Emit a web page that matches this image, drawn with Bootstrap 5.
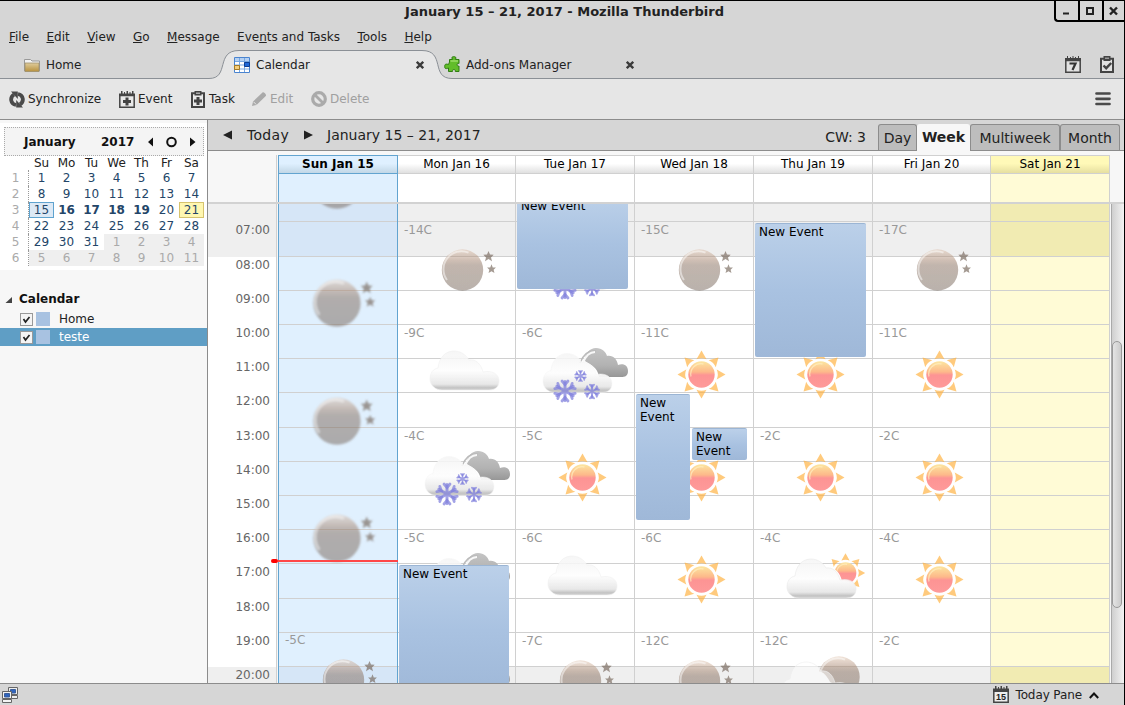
<!DOCTYPE html>
<html lang="en">
<head>
<meta charset="utf-8">
<title>January 15 – 21, 2017 - Mozilla Thunderbird</title>
<meta name="viewport" content="width=device-width, initial-scale=1">
<link href="https://cdn.jsdelivr.net/npm/bootstrap@5.3.0/dist/css/bootstrap.min.css" rel="stylesheet">
<style>
  body { font-family: "DejaVu Sans", Verdana, sans-serif; font-size: 12px; line-height: 16px; color: #222; background: #d6d6d6; }
  svg { display: block; flex: none; }
  .app-window { width: 1125px; height: 705px; background: #d6d6d6; border-top: 1px solid #000; border-right: 1px solid #000; }
  .title-bar { height: 26px; padding: 3px 0 0 5px; font-size: 13px; font-weight: 700; }
  .window-buttons { top: 0; right: 0; width: 70px; height: 21px; border: 2px solid #000; border-width: 0 0 2px 2px; border-bottom-left-radius: 4px; }
  .window-buttons span + span { border-left: 2px solid #000; }
  .menu-bar { height: 20px; padding-left: 9px; gap: 17.4px; }
  .tab-strip { height: 30px; margin-top: 2px; }
  .tab-shape { left: 0; bottom: 0; }
  .app-tab { height: 28px; padding-top: 1px; }
  .tab-name { padding-top: 2px; }
  .tool-strip { height: 41px; background: #e6e6e6; padding-left: 9px; border-bottom: 1px solid #8c8c8c; }
  .tool-item { gap: 3px; }
  .is-off { color: #a0a0a0; }
  .side-pane { width: 208px; background: #f7f7f7; border-right: 1px solid #8c8c8c; }
  .mini-month { margin-top: 3px; height: 147px; background: #fff; padding: 4px 4px 0; }
  .mini-head { width: 200px; height: 29px; background: #f4f4f4; border: 1px dotted #aaa; font-weight: 700; color: #111; }
  .mini-grid { display: grid; grid-template-columns: repeat(8, 25px); grid-template-rows: 14px repeat(6, 16px); text-align: center; color: #234568; }
  .mini-grid > div { line-height: 16px; }
  .mini-grid .day-name { color: #222; line-height: 14px; }
  .mini-grid .week-no { color: #aaa; border-right: 1px dotted #999; padding-right: 1px; }
  .mini-grid .other { color: #aaa; background: #efefef; }
  .mini-grid .today { background: #dde9f5; box-shadow: inset 0 0 0 1px #5fa3cf; }
  .mini-grid .picked { background: #fff7b0; box-shadow: inset 0 0 0 1px #d6c36e; }
  .tree-row { height: 18px; padding-left: 20px; }
  .tree-row.chosen { background: #5f9ec5; color: #fff; }
  .check-box { width: 13px; height: 13px; background: #f4f4f4; border: 1px solid #999; margin-right: 3px; margin-top: 1px; }
  .swatch { width: 14px; height: 14px; background: #a8c2e1; margin-right: 9px; }
  .view-bar { height: 31px; border-bottom: 1px solid #8c8c8c; font-size: 14px; }
  .view-tab { background: #bdbdbd; border: 1px solid #8c8c8c; border-bottom: 0; height: 26px; border-radius: 3px 3px 0 0; text-align: center; padding-top: 5px; }
  .view-tab.current { background: #f7f7f7; border-color: #f7f7f7; height: 27px; font-weight: 700; margin-bottom: -1px; padding-top: 4px; }
  .calendar-view { background: #f7f7f7; }
  .week-grid { display: grid; grid-template-columns: 70px 120px 118px 119px 119px 119px 118px 119px 14px; }
  .head-row { height: 49px; margin-top: 4px; border-bottom: 2px solid #d2d2d2; }
  .gutter { border-right: 1px solid #d0d0d0; width: 69px; }
  .head-cell { border: 1px solid #d0d0d0; border-left: 0; height: 19px; line-height: 17px; text-align: center; color: #000; background: linear-gradient(#fff 45%, #e0e0e0); }
  .all-day { background: #fff; border-right: 1px solid #d0d0d0; height: 28px; }
  .now .head-cell { border: 1px solid #62a4d0; font-weight: 700; background: linear-gradient(#dff0ff 45%, #c2d7e6); }
  .now .all-day { border: 1px solid #62a4d0; border-width: 0 1px; background: #e0f0fe; }
  .chosen-day .head-cell { background: linear-gradient(#fff9b8 45%, #e6dfa0); }
  .chosen-day .all-day { background: #fffbd6; }
  .time-body { height: 479px; overflow: hidden; }
  .hour { border-bottom: 1px solid #d0d0d0; background: #fff; }
  .hour.off { background: #efefef; }
  .day-col { border-right: 1px solid #d0d0d0; }
  .now.day-col { border: 1px solid #62a4d0; border-width: 0 1px; }
  .now .hour { background: #e0f0fe; } .now .hour.off { background: #d6e6f7; }
  .chosen-day .hour { background: #fffbd6; } .chosen-day .hour.off { background: #f1ebb2; }
  .time-label { color: #666; text-align: right; padding-right: 6px; background: #fff; }
  .time-label.off { background: #efefef; }
  .forecast-layer { left: 0; right: 0; }
  .forecast { position: relative; overflow: visible; }
  .forecast span { position: absolute; left: 6px; top: 1px; color: #999; }
  .forecast svg { overflow: visible; }
  .event-box { background: linear-gradient(#bbd0e9, #a9c2e1 50%, #9fb8d8); border-top: 1px solid #9bb5d4; border-radius: 2px; color: #000; line-height: 14px; padding: 1px 4px; }
  .now-line { left: -1px; width: 120px; top: 356px; height: 2px; background: #ff4747; z-index: 3; }
  .now-dot { left: -8px; width: 7px; top: 355px; height: 4px; background: #f00; border-radius: 2px; z-index: 3; }
  .scroll-track { margin-left: 1px; background: linear-gradient(90deg, #cfcfcf, #f3f3f3); border-left: 1px solid #aaa; }
  .scroll-thumb { margin: 137px 0 0 0; width: 10px; height: 267px; border: 1px solid #999; border-radius: 5px; background: linear-gradient(90deg, #e4e4e4, #cbcbcb); }
  .status-line { height: 22px; border-top: 1px solid #8c8c8c; }
</style>
</head>
<body class="overflow-hidden">

<svg width="0" height="0" class="position-absolute" aria-hidden="true">
  <defs>
    <filter id="soft" x="-10%" y="-10%" width="120%" height="120%"><feGaussianBlur stdDeviation=".75"/></filter>
    <linearGradient id="moonFill" x1="0" y1="0" x2="0" y2="1"><stop offset="0" stop-color="#d9b79d" stop-opacity=".4"/><stop offset=".25" stop-color="#a4836d" stop-opacity=".5"/><stop offset=".38" stop-color="#856c5b" stop-opacity=".5"/><stop offset="1" stop-color="#75655a" stop-opacity=".5"/></linearGradient>
    <linearGradient id="sunFill" x1="0" y1="0" x2="0" y2="1"><stop offset="0" stop-color="#fce6a0"/><stop offset=".4" stop-color="#fdb98a"/><stop offset=".52" stop-color="#fd9494"/><stop offset="1" stop-color="#fe9a9a"/></linearGradient>
    <linearGradient id="cloudFill" x1="0" y1="0" x2="0" y2="1"><stop offset="0" stop-color="#f4f4f4" stop-opacity=".85"/><stop offset=".5" stop-color="#fdfdfd" stop-opacity=".93"/><stop offset=".85" stop-color="#e8e8e8"/><stop offset=".94" stop-color="#c4c4c4"/><stop offset="1" stop-color="#d0d0d0"/></linearGradient>
    <linearGradient id="darkFill" x1="0" y1="0" x2="0" y2="1"><stop offset="0" stop-color="#c4c4c4"/><stop offset=".6" stop-color="#b2b2b2"/><stop offset="1" stop-color="#979797"/></linearGradient>
    <path id="cloudShape" d="M12 39C5 39 0 34 0 28c0-6 3-10 8-11C9 7 15 0 24 0c7 0 12 4 15 9 7-1 12 4 14 12 9-2 16 2 16 9 0 6-4 9-10 9z"/>
    <path id="starShape" d="M0-5.500 1.500-1.900 5.200-1.700 2.500.9 3.500 4.800 0 2.600-3.500 4.800-2.500.9-5.200-1.700-1.500-1.900z"/>
    <g id="flake" stroke-linecap="round"><path d="M0-9.500V9.500M-8.200-4.700 8.200 4.700M-8.200 4.700 8.200-4.700" stroke-width="3"/><path d="M-3-10 0-6.500 3-10M-3 10 0 6.500 3 10M-10.200-2.400-5.600-3.200-7.200-7.600M10.200 2.400 5.600 3.200 7.200 7.600M-10.200 2.400-5.600 3.200-7.200 7.600M10.200-2.400 5.600-3.200 7.200-7.600" fill="none" stroke-width="2.800"/></g>
    <g id="sunShape">
      <g fill="#ffae38" fill-opacity=".66"><path id="ray" d="M0-24 5-15.200Q0-17.400-5-15.200z"/><use href="#ray" transform="rotate(45)"/><use href="#ray" transform="rotate(90)"/><use href="#ray" transform="rotate(135)"/><use href="#ray" transform="rotate(180)"/><use href="#ray" transform="rotate(225)"/><use href="#ray" transform="rotate(270)"/><use href="#ray" transform="rotate(315)"/></g>
      <circle r="13.200" fill="url(#sunFill)"/><path d="M-10.500 2A10.500 10.500 0 0 1 2-10.500" fill="none" stroke="#fff0c0" stroke-opacity=".7" stroke-width="1.300"/>
    </g>
    <g id="moonDisc"><circle r="20.700" fill="url(#moonFill)"/><path d="M-15.500 10A18 18 0 0 1 6-17.300" fill="none" stroke="#fff" stroke-opacity=".5" stroke-width="2"/></g>
    <clipPath id="moonClip"><path d="M60 0H118V103H83C84 60 84 53 76 50 73 44 70 40 64 39z"/></clipPath>
    <clipPath id="sunClip"><path d="M60 0H118V65H103C102 56 96 51 88 52 86 44 82 40 76 38z"/></clipPath>

    <symbol id="w-moon" viewBox="0 0 118 103"><g filter="url(#soft)"><use href="#moonDisc" x="64.500" y="49"/><g fill="#75655a" fill-opacity=".66"><use href="#starShape" transform="translate(90.500 35.500)"/><use href="#starShape" transform="translate(93.500 48) scale(.85)"/></g></g></symbol>
    <symbol id="w-sun" viewBox="0 0 118 103"><g filter="url(#soft)"><use href="#sunShape" x="66.500" y="50.500"/></g></symbol>
    <symbol id="w-cloud" viewBox="0 0 118 103"><g filter="url(#soft)"><use href="#cloudShape" x="32" y="27" fill="url(#cloudFill)" stroke="#f0f0f0" stroke-width=".6"/></g></symbol>
    <symbol id="w-snow" viewBox="0 0 118 103"><g filter="url(#soft)">
      <path d="M69 37C69 29 74 24 80 24c6 0 10 4 11 8 6-1 10 3 11 9 6-2 10 1 10 6s-3 6-7 6H83C82 46 78 42 72 39z" fill="url(#darkFill)"/><path d="M64 39C68 29 73 26 80 27" fill="none" stroke="#bbb" stroke-width="1.500"/><path d="M67 39C70 31 74 28 79 28" fill="none" stroke="#f8f8f8" stroke-width="1.800"/>
      <use href="#cloudShape" x="27" y="29.500" fill="url(#cloudFill)" stroke="#f5f5f5" stroke-width=".5"/>
      <g stroke="#8080dc" stroke-opacity=".72"><use href="#flake" transform="translate(49 67)"/><use href="#flake" transform="translate(64.500 52) scale(.53)"/><use href="#flake" transform="translate(76 67.500) scale(.68)"/></g></g></symbol>
    <symbol id="w-sun-cloud" viewBox="0 0 118 103"><g filter="url(#soft)"><g clip-path="url(#sunClip)"><use href="#sunShape" transform="translate(91.500 44) scale(.82)"/></g><use href="#cloudShape" x="33" y="30" fill="url(#cloudFill)" stroke="#e9e9e9" stroke-width=".6"/></g></symbol>
    <symbol id="w-moon-cloud" viewBox="0 0 118 103"><g filter="url(#soft)"><g clip-path="url(#moonClip)"><use href="#moonDisc" x="85" y="45"/></g><use href="#cloudShape" x="28" y="30" fill="#fff" fill-opacity=".5" stroke="#eee" stroke-width=".6"/></g></symbol>
  </defs>
</svg>

<div class="app-window d-flex flex-column position-relative">
  <div class="title-bar text-center"><span>January 15 – 21, 2017 - Mozilla Thunderbird</span></div>
  <div class="window-buttons position-absolute d-flex">
    <span class="flex-fill"><svg width="22" height="19"><path d="M7 12.500h6" stroke="#222" stroke-width="2"/></svg></span>
    <span class="flex-fill"><svg width="22" height="19"><path d="M7 7h6v6H7z" fill="none" stroke="#222" stroke-width="2"/></svg></span>
    <span class="flex-fill"><svg width="20" height="19"><path d="m6 6.500 7 7m0-7-7 7" stroke="#222" stroke-width="2.400"/></svg></span>
  </div>

  <nav class="menu-bar d-flex align-items-center">
    <span><u>F</u>ile</span><span><u>E</u>dit</span><span><u>V</u>iew</span><span><u>G</u>o</span><span><u>M</u>essage</span><span>Eve<u>n</u>ts and Tasks</span><span><u>T</u>ools</span><span><u>H</u>elp</span>
  </nav>

  <div class="tab-strip position-relative">
    <svg class="tab-shape position-absolute" width="1124" height="30"><path d="M0 29.500H209C230 29.500 215 1.500 239 1.500H422C446 1.500 430 29.500 452 29.500H1124V31H0z" fill="#e6e6e6" stroke="#8b9096"/></svg>
    <div class="position-relative d-flex">
      <div class="app-tab d-flex align-items-center" style="width:234px;padding-left:24px">
        <svg style="margin-top:2px" width="16" height="16"><defs><linearGradient id="fold" x1="0" y1="0" x2="0" y2="1"><stop offset="0" stop-color="#dfcc9c"/><stop offset="1" stop-color="#b8923f"/></linearGradient></defs><path d="M.5 5V2.500h6L8 4h7.500v10H.5z" fill="#f3f3f3" stroke="#999"/><path d="M1 6h14v8.500H1z" fill="url(#fold)" stroke="#a0906a" stroke-width=".8"/></svg>
        <span class="tab-name" style="margin-left:6px">Home</span>
      </div>
      <div class="app-tab d-flex align-items-center" style="width:210px">
        <svg style="margin-top:2px" width="16" height="16"><path d="M.5.500h15v15H.5z" fill="#fff" stroke="#4a84cf"/><path d="M1 1h14v3H1z" fill="#b4d0f2"/><path d="M5.500 1v14M10.500 1v14M1 4.500h14M1 8h14M1 12h14" stroke="#77a7e2"/><path d="M10.500 5.500h5v4h-5z" fill="#1e67d8" stroke="#0e3f92"/><path d="M.5 8.500h5v4h-5z" fill="#f5cf7c" stroke="#a77a22"/></svg>
        <span class="tab-name" style="margin-left:6px">Calendar</span>
        <svg class="ms-auto" style="margin:2px 20px 0 0" width="8" height="8"><path d="m.8.800 6.400 6.400m0-6.400L.8 7.200" stroke="#3b3b3b" stroke-width="2.300"/></svg>
      </div>
      <div class="app-tab d-flex align-items-center" style="width:210px">
        <svg style="margin-top:2px" width="17" height="17"><path d="M5.500 6V3.500h3C7 1 8.500.7 9.800.7S12.800 1 11.500 3.500H15V7.500c-2.500-1.300-2.500 3.500 0 2.500V15.500H11.300c1-2.500-3.800-2.500-2.800 0H4.500V12C1 13.500.7 12 .7 10.500S1 7.300 4.500 8.500z" fill="#62bd2a" stroke="#2f7c12"/><path d="M6.500 5h7.500" stroke="#b5ec83"/></svg>
        <span class="tab-name" style="margin-left:5px">Add-ons Manager</span>
        <svg class="ms-auto" style="margin:2px 20px 0 0" width="8" height="8"><path d="m.8.800 6.400 6.400m0-6.400L.8 7.200" stroke="#3b3b3b" stroke-width="2.300"/></svg>
      </div>
      <div class="app-tab d-flex align-items-center ms-auto" style="gap:19px;padding:2px 10px 0 0">
        <svg width="16" height="17"><path d="M.8 4.500h14.400v11.700H.8z" fill="#e2e2e2" stroke="#444" stroke-width="1.500"/><path d="M0 2h16v3H0z" fill="#444"/><path d="M2.500 0v3M5.500 1v2M8 0v3M10.500 1v2M13.500 0v3" stroke="#444"/><path d="M4.500 7.500h6L7.500 14" fill="none" stroke="#333" stroke-width="2.200"/></svg>
        <svg width="14" height="17"><path d="M1 2.800h12v13.200H1z" fill="#e2e2e2" stroke="#444" stroke-width="2"/><path d="M3.500 0h7v5h-7z" fill="#444"/><path d="M5 1.500h4V3H5z" fill="#999"/><path d="m3.500 9.500 2.700 2.700 5-5.200" fill="none" stroke="#444" stroke-width="2.400"/></svg>
      </div>
    </div>
  </div>

  <div class="tool-strip d-flex align-items-center">
    <div class="tool-item d-flex align-items-center" style="width:110px">
      <svg width="16" height="17"><path d="M7 14C1.500 13 .5 6.500 5 3.500M9 3c5.500 1 6.500 7.500 2 10.500" fill="none" stroke="#4a4a4a" stroke-width="3.800"/><path d="M2 .5h6.800V8zM14 16.500H7.200V9z" fill="#4a4a4a"/></svg><span>Synchronize</span></div>
    <div class="tool-item d-flex align-items-center" style="width:72px">
      <svg width="16" height="17"><path d="M.8 4.500h14.400v11.700H.8z" fill="#e9e9e9" stroke="#444" stroke-width="1.500"/><path d="M0 2.500h16v2.500H0zM2 0h1.500v3H2zM5 1h1v2H5zM7.500 0H9v3H7.500zM10.500 1h1v2h-1zM13 0h1.500v3H13zM6.500 6.500h3v2.500H12v3H9.500v2.500h-3V12H4V9h2.500z" fill="#444"/></svg><span>Event</span></div>
    <div class="tool-item d-flex align-items-center" style="width:60px;gap:4px">
      <svg width="14" height="17"><path d="M1 2.300h12v13.700H1z" fill="#e9e9e9" stroke="#444" stroke-width="2"/><path d="M3.500 0h7v4.500h-7zM5.500 6h3v2.500H11v3H8.500V14h-3v-2.500H3v-3h2.500z" fill="#444"/><path d="M5 1.500h4V3H5z" fill="#aaa"/></svg><span>Task</span></div>
    <div class="tool-item is-off d-flex align-items-center" style="width:60px">
      <svg width="16" height="16"><path d="m1 15 1-4.500L11.500 1.500c1-1 4.500 2 3.300 3.500L5.500 14z" fill="#aaa"/><path d="m2.500 10.800 2.800 2.800" stroke="#e6e6e6"/></svg><span>Edit</span></div>
    <div class="tool-item is-off d-flex align-items-center">
      <svg width="16" height="16"><circle cx="8" cy="8" r="6.300" fill="none" stroke="#aaa" stroke-width="3.200"/><path d="m4 4 8 8" stroke="#aaa" stroke-width="2.800"/></svg><span>Delete</span></div>
    <svg class="ms-auto" style="margin-right:13px" width="16" height="14"><path d="M1.500 1.500h13M1.500 6.800h13M1.500 12h13" stroke="#4a4a4a" stroke-width="2.700" stroke-linecap="round"/></svg>
  </div>

  <div class="d-flex flex-fill" style="min-height:0">
    <aside class="side-pane">
      <div class="mini-month">
        <div class="mini-head d-flex align-items-center">
          <span style="width:77px;padding-left:19px">January</span><span style="width:66px;padding-left:19px">2017</span>
          <svg width="52" height="12"><path d="M5 1.500v9L0 6zM42 1.500v9L47.500 6z" fill="#111"/><circle cx="23.500" cy="6" r="4.300" fill="none" stroke="#111" stroke-width="2"/></svg>
        </div>
        <div class="mini-grid" id="miniGrid"></div>
      </div>
      <div class="d-flex align-items-center fw-bold" style="margin-top:21px;height:18px;padding-left:5px;gap:6px;color:#111"><svg width="8" height="8"><path d="M7 1v6H.5z" fill="#444"/></svg><span style="margin-top:-2px">Calendar</span></div>
      <div class="tree-row d-flex align-items-center" style="margin-top:1px"><span class="check-box"><svg width="11" height="11"><path d="m2.500 5 2 3 4-5" fill="none" stroke="#222" stroke-width="1.700"/></svg></span><span class="swatch"></span><span>Home</span></div>
      <div class="tree-row chosen d-flex align-items-center"><span class="check-box"><svg width="11" height="11"><path d="m2.500 5 2 3 4-5" fill="none" stroke="#222" stroke-width="1.700"/></svg></span><span class="swatch"></span><span>teste</span></div>
    </aside>

    <main class="calendar-view flex-fill d-flex flex-column">
      <div class="view-bar d-flex align-items-center" style="background:#d6d6d6;padding-left:15px">
        <svg width="9" height="10"><path d="M9 .5v9L0 5z" fill="#222"/></svg>
        <span style="margin-left:15px;letter-spacing:.3px">Today</span>
        <svg style="margin-left:15px" width="9" height="10"><path d="M0 .5v9L9 5z" fill="#222"/></svg>
        <span style="margin-left:14px">January 15 – 21, 2017</span>
        <span class="ms-auto" style="margin-right:12px;padding-top:3px">CW: 3</span>
        <div class="d-flex align-self-end" style="margin-right:4px">
          <div class="view-tab" style="width:39px">Day</div><div class="view-tab current" style="width:53px">Week</div><div class="view-tab" style="width:90px">Multiweek</div><div class="view-tab" style="width:60px">Month</div>
        </div>
      </div>
      <div class="week-grid head-row" id="headRow"><div class="gutter"></div></div>
      <div class="week-grid time-body" id="timeBody"></div>
    </main>
  </div>

  <footer class="status-line d-flex align-items-center">
    <svg style="margin-left:2px" width="16" height="16"><g stroke="#666"><path d="M6.500.5h9v7h-9zM7.500 8.500h8v3h-8z" fill="#eee"/><path d="M8.500 2.500h5v3.500h-5z" fill="#2f65c0" stroke="#3d5f9a"/><path d="M.5 4.500h9v7h-9zM.5 12.500h9v3h-9z" fill="#f4f4f4"/><path d="M2.500 6.500h5v3.500h-5z" fill="#2f65c0" stroke="#3d5f9a"/></g></svg>
    <div class="d-flex align-items-center ms-auto" style="padding-right:25px">
      <svg width="16" height="17"><path d="M.8 4.500h14.400v11.700H.8z" fill="#eee" stroke="#444" stroke-width="1.500"/><path d="M0 2.500h16V6H0zM2 0h1.500v3H2zM5 1h1v2H5zM7.500 0H9v3H7.500zM10.500 1h1v2h-1zM13 0h1.500v3H13z" fill="#444"/><text x="8" y="14" font-size="9" font-weight="700" text-anchor="middle" fill="#222" font-family="Liberation Sans, sans-serif">15</text></svg>
      <span style="margin-left:6px;letter-spacing:-.1px">Today Pane</span>
      <svg style="margin:1px 0 0 7px" width="10" height="7"><path d="m.8 6 4.200-4.500L9.200 6" fill="none" stroke="#111" stroke-width="2"/></svg>
    </div>
  </footer>
</div>

<script src="https://cdn.jsdelivr.net/npm/bootstrap@5.3.0/dist/js/bootstrap.bundle.min.js"></script>
<script>
  const cell = (cls, text) => `<div class="${cls}">${text}</div>`;

  // mini month
  let mini = cell('', '') + ['Su','Mo','Tu','We','Th','Fr','Sa'].map(d => cell('day-name', d)).join('');
  for (let i = 0; i < 42; i++) {
    if (i % 7 === 0) mini += cell('week-no', i / 7 + 1);
    const n = i + 1, d = n > 31 ? n - 31 : n;
    const cls = n > 31 ? 'other' : n === 15 ? 'today' : n === 21 ? 'picked' : n > 15 && n < 20 ? 'fw-bold' : '';
    mini += cell(cls, d);
  }
  document.getElementById('miniGrid').innerHTML = mini;

  // week view: heights of the visible hour rows, from a partly scrolled 06:00
  const hours = [18, 35, 34, 34, 34, 34, 35, 34, 34, 34, 34, 35, 34, 34, 34];
  const isOff = i => i < 2 || i === 14;
  const blocks = [103, 103, 102, 103, 103];
  const days = [
    { name: 'Sun Jan 15', cls: 'now', top: -75, fc: [['', 'moon', 118], ['', 'moon', 118], ['', 'moon', 117], ['', 'moon', 118], ['', '', 31], ['-5C', 'moon', 103]], ev: [] },
    { name: 'Mon Jan 16', fc: [['-14C', 'moon'], ['-9C', 'cloud'], ['-4C', 'snow'], ['-5C', 'snow'], ['', 'snow']], ev: [[1, 361, 110, 130]] },
    { name: 'Tue Jan 17', fc: [['', 'snow'], ['-6C', 'snow'], ['-5C', 'sun'], ['-6C', 'cloud'], ['-7C', 'moon']], ev: [[1, -7, 111, 92]] },
    { name: 'Wed Jan 18', fc: [['-15C', 'moon'], ['-11C', 'sun'], ['', 'sun'], ['-6C', 'sun'], ['-12C', 'moon']], ev: [[1, 190, 54, 126], [57, 224, 55, 32]] },
    { name: 'Thu Jan 19', fc: [['', 'sun'], ['', 'sun'], ['-2C', 'sun'], ['-4C', 'sun-cloud'], ['-12C', 'moon-cloud']], ev: [[1, 19, 111, 134]] },
    { name: 'Fri Jan 20', fc: [['-17C', 'moon'], ['-11C', 'sun'], ['-2C', 'sun'], ['-4C', 'sun'], ['-2C', '']], ev: [] },
    { name: 'Sat Jan 21', cls: 'chosen-day', fc: [], ev: [] }
  ];
  document.getElementById('headRow').innerHTML += days.map(d =>
    `<div class="${d.cls || ''}"><div class="head-cell">${d.name}</div><div class="all-day"></div></div>`).join('');

  let body = '<div class="gutter">' + hours.map((h, i) =>
    `<div class="time-label ${isOff(i) ? 'off' : ''}" style="height:${h}px">${i ? String(i + 6).padStart(2, '0') + ':00' : ''}</div>`).join('') + '</div>';
  for (const d of days) {
    body += `<div class="day-col position-relative ${d.cls || ''}">`;
    body += hours.map((h, i) => `<div class="hour ${isOff(i) ? 'off' : ''}" style="height:${h}px"></div>`).join('');
    body += `<div class="forecast-layer position-absolute" style="top:${d.top || 17}px">` + d.fc.map(([t, icon, h], i) => {
      h = h || blocks[i];
      const k = h > 110 ? 1.146 : 1;
      return `<div class="forecast" style="height:${h}px">${t ? `<span>${t}</span>` : ''}${icon ? `<svg width="${118 * k}" height="${103 * k}" style="margin-left:${k > 1 ? -16 : 0}px"><use href="#w-${icon}"/></svg>` : ''}</div>`;
    }).join('') + '</div>';
    body += d.ev.map(([x, y, w, h]) => `<div class="event-box position-absolute" style="left:${x}px;top:${y}px;width:${w}px;height:${h}px">New Event</div>`).join('');
    if (d.cls === 'now') body += '<div class="now-line position-absolute"></div><div class="now-dot position-absolute"></div>';
    body += '</div>';
  }
  body += '<div class="scroll-track"><div class="scroll-thumb"></div></div>';
  document.getElementById('timeBody').innerHTML = body;
</script>
</body>
</html>
